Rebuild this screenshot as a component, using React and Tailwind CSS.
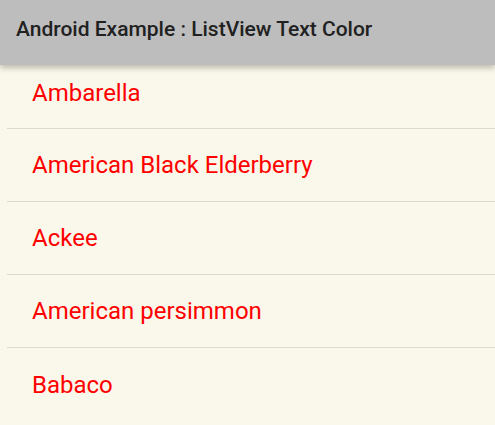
import React from 'react';

const fruits = ['Ambarella', 'American Black Elderberry', 'Ackee', 'American persimmon', 'Babaco'];

export default function App() {
  return (
    <div className="w-[495px] h-[425px] overflow-hidden bg-[#faf8ea] flex flex-col font-['Roboto',sans-serif]">
      <div className="relative z-10 h-[65px] shrink-0 bg-[#bdbdbd] flex items-center px-4 shadow-[0_3px_6px_rgba(0,0,0,0.25)]">
        <h1 className="text-[21px] font-medium text-[#212121] pb-[6px]">Android Example : ListView Text Color</h1>
      </div>
      <ul className="flex flex-col">
        {fruits.map((name, i) => (
          <li
            key={name}
            className={
              i === 0
                ? 'h-[64px] shrink-0 flex items-center pl-[25px] pb-[8px] border-b border-[#dcdbd0] ml-[7px]'
                : 'h-[73px] shrink-0 flex items-center pl-[25px] border-b border-[#dcdbd0] ml-[7px] last:border-b-0'
            }
          >
            <span className="text-[24px] text-[#ff0000]">{name}</span>
          </li>
        ))}
      </ul>
    </div>
  );
}
